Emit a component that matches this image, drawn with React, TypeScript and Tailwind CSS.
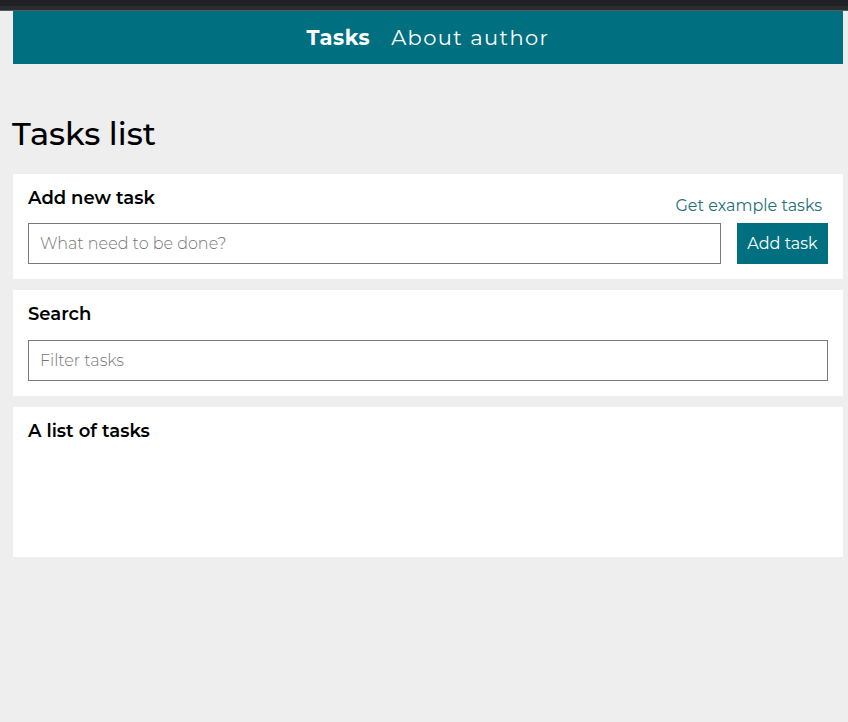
export default function App() {
  return (
    <div className="min-h-[722px] bg-[#eeeeee] font-['Montserrat','DejaVu_Sans',sans-serif] text-black">
      <div className="h-[6px] bg-[#202124]" />
      <div className="h-[4px] bg-[#2b2c30]" />
      <div className="h-px bg-[#5a5a5a]" />
      <div className="pl-[13px] pr-[5px]">
        <nav className="flex h-[53px] items-center justify-center gap-[21px] bg-[#007080] text-[21px] text-white">
          <a className="font-bold tracking-[0.5px]">Tasks</a>
          <a className="tracking-[1.4px]">About author</a>
        </nav>
      </div>
      <main className="pl-[13px] pr-[5px]">
        <h1 className="mt-[50px] mb-[20px] -ml-px text-[32px] font-medium leading-[40px]">Tasks list</h1>
        <div className="flex flex-col gap-[11px]">
          <section className="bg-white px-[15px] pt-[13px] pb-[15px]">
            <div className="flex items-start justify-between">
              <h2 className="text-[18px] font-semibold leading-[22px]">Add new task</h2>
              <a className="mt-[9px] mr-[6px] text-[16px] leading-[20px] text-[#1f6f7c]">Get example tasks</a>
            </div>
            <div className="mt-[7px] flex gap-[16px]">
              <input
                className="h-[41px] flex-1 border border-[#7a7a7a] px-[11px] text-[16px] font-light outline-none placeholder:text-[#767676]"
                placeholder="What need to be done?"
              />
              <button className="h-[41px] w-[91px] bg-[#007080] text-[16px] text-white">Add task</button>
            </div>
          </section>
          <section className="bg-white px-[15px] pt-[13px] pb-[15px]">
            <h2 className="text-[18px] font-semibold leading-[22px]">Search</h2>
            <input
              className="mt-[15px] h-[41px] w-full border border-[#7a7a7a] px-[11px] text-[16px] font-light outline-none placeholder:text-[#767676]"
              placeholder="Filter tasks"
            />
          </section>
          <section className="h-[150px] bg-white px-[15px] pt-[13px]">
            <h2 className="text-[18px] font-semibold leading-[22px]">A list of tasks</h2>
          </section>
        </div>
      </main>
    </div>
  );
}
